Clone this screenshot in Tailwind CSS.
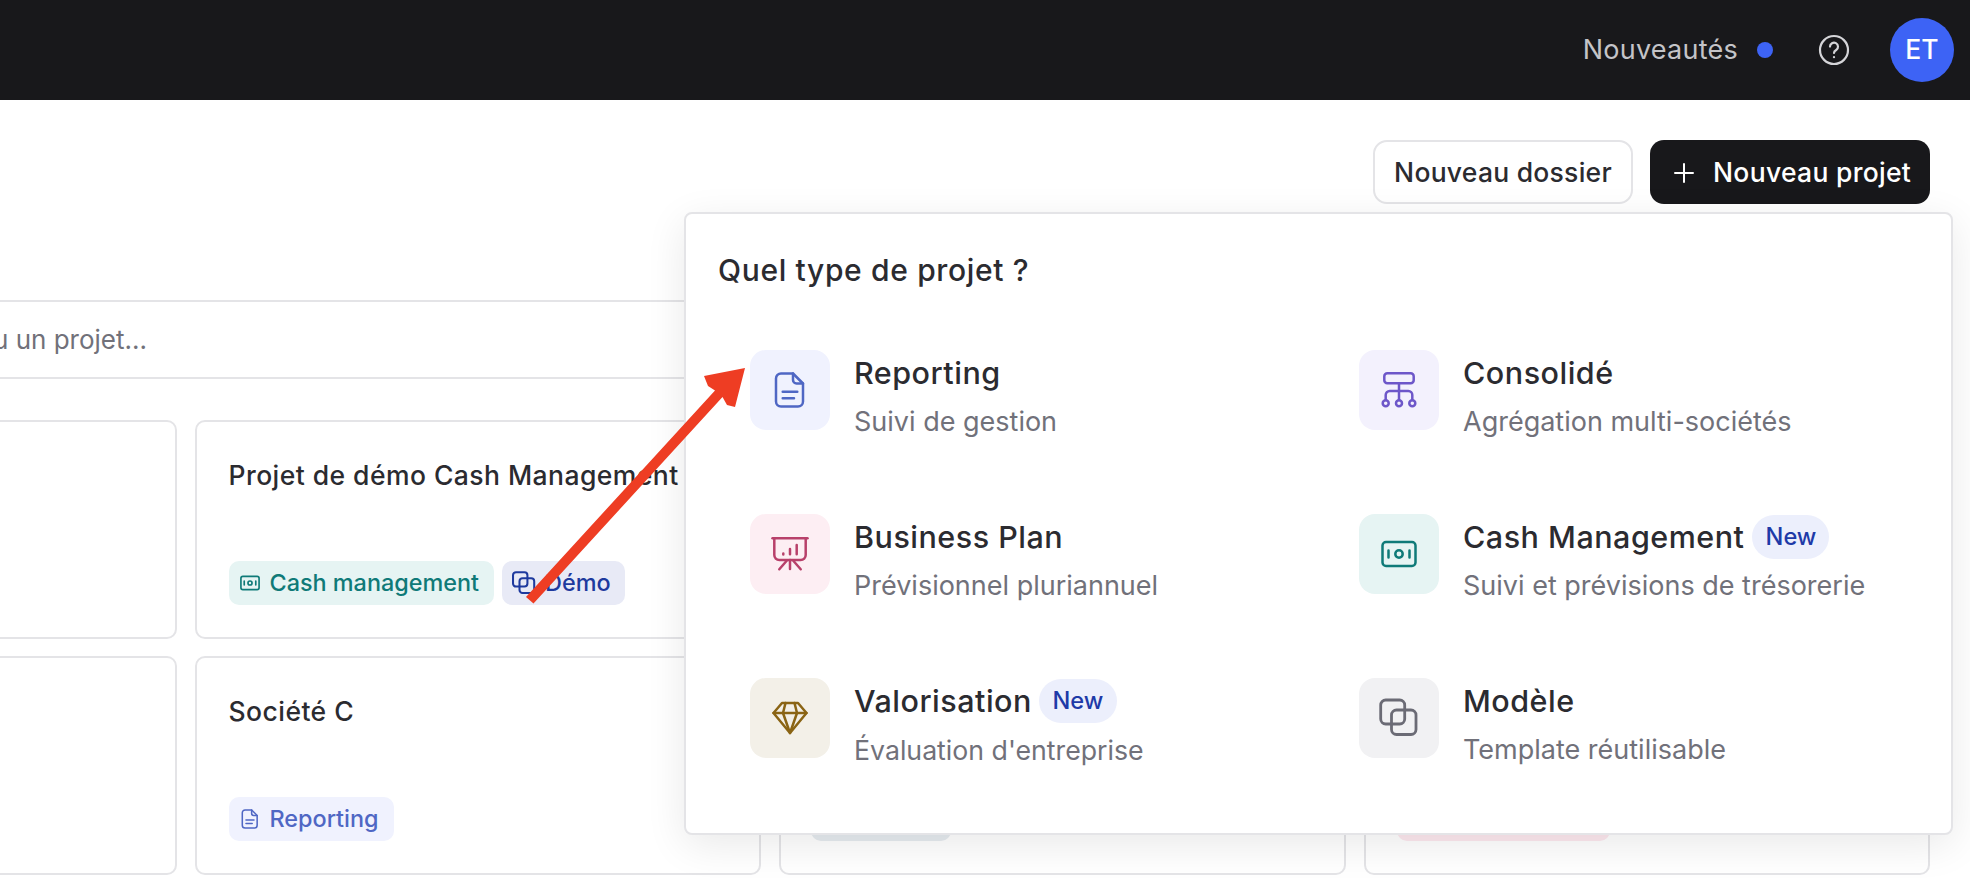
<!doctype html>
<html lang="fr">
<head>
<meta charset="utf-8">
<title>Projets</title>
<script src="https://cdn.jsdelivr.net/npm/@tailwindcss/browser@4"></script>
</head>
<body class="relative h-[890px] w-[1970px] overflow-hidden bg-white font-['Inter',sans-serif] text-[#2b2b30]">
  <header class="flex h-[100px] items-center justify-end bg-[#18181b] pr-[16px]">
    <span class="text-[27px] tracking-[0.25px] text-[#c4c4c8]">Nouveautés</span>
    <span class="ml-[19px] h-[16px] w-[16px] rounded-full bg-[#3d63f5]"></span>
    <svg class="ml-[45px]" width="32" height="32" viewBox="0 0 32 32" fill="none" stroke="#d4d4d8" stroke-width="2.200" stroke-linecap="round" stroke-linejoin="round"><circle cx="16" cy="16" r="14"/><path d="M12 12.600a4 4 0 1 1 6.200 3.400c-1.400.9-2.200 1.600-2.200 3"/><path d="M16 23v.2"/></svg>
    <span class="ml-[40px] flex h-[64px] w-[64px] items-center justify-center rounded-full bg-[#3d63f5] text-[26.500px] font-[450] text-white">ET</span>
  </header>

  <main>
    <div class="flex justify-end gap-[17px] pr-[40px] pt-[40px]">
      <button class="flex h-[64px] w-[260px] items-center justify-center rounded-[14px] border-2 border-[#e4e4e7] bg-white pt-[1px] text-[26.500px] font-[450] tracking-[0.25px] text-[#2b2b30]">Nouveau dossier</button>
      <button class="flex h-[64px] w-[280px] items-center gap-[19px] rounded-[14px] bg-[#18181b] pl-[24px] pt-[1px] text-[26.500px] font-[450] tracking-[0.3px] text-white">
        <svg width="20" height="20" viewBox="0 0 20 20" fill="none" stroke="#fff" stroke-width="2" stroke-linecap="round"><path d="M10 1v18M1 10h18"/></svg>
        Nouveau projet
      </button>
    </div>

    <div class="mr-[40px] mt-[96px] flex h-[79px] items-center border-y-2 border-[#e4e4e7]">
      <div class="flex w-[147px] justify-end overflow-hidden whitespace-nowrap text-[26px] text-[#71717a]">Rechercher un dossier ou un projet...</div>
    </div>

    <div class="ml-[-390px] mr-[40px] mt-[41px] grid grid-cols-4 gap-x-[18px] gap-y-[17px]">
      <div class="h-[219px] rounded-[10px] border-2 border-[#e4e4e7]"></div>
      <div class="h-[219px] rounded-[10px] border-2 border-[#e4e4e7] px-[32px] pt-[37px]">
        <div class="h-[32px] whitespace-nowrap text-[26.500px] font-[450] leading-[32px] tracking-[0.45px]">Projet de démo Cash Management</div>
        <div class="mt-[70px] flex gap-[8px]">
          <span class="flex h-[44px] items-center gap-[9px] rounded-[10px] bg-[#e6f4f3] pl-[10px] pr-[15px] text-[23.400px] font-[450] text-[#0f7a78]">
            <svg width="22" height="22" viewBox="0 0 40 40" fill="none" stroke="currentColor" stroke-width="3" stroke-linecap="round"><rect x="3.500" y="8" width="33" height="24" rx="3.500"/><circle cx="20" cy="20" r="3.700"/><path d="M9.500 16.500v7M30.500 16.500v7"/></svg>
            Cash management
          </span>
          <span class="flex h-[44px] items-center gap-[9px] rounded-[10px] bg-[#e8eaf6] pl-[10px] pr-[14px] text-[23.400px] font-[450] text-[#1e3a9e]">
            <svg width="24" height="24" viewBox="0 0 40 40" fill="none" stroke="currentColor" stroke-width="3.400"><rect x="1.700" y="2" width="24" height="24" rx="5"/><rect x="12.500" y="12" width="24.500" height="24.500" rx="5"/></svg>
            Démo
          </span>
        </div>
      </div>
      <div class="h-[219px] rounded-[10px] border-2 border-[#e4e4e7]"></div>
      <div class="h-[219px] rounded-[10px] border-2 border-[#e4e4e7]"></div>

      <div class="h-[219px] rounded-[10px] border-2 border-[#e4e4e7]"></div>
      <div class="h-[219px] rounded-[10px] border-2 border-[#e4e4e7] px-[32px] pt-[37px]">
        <div class="h-[32px] whitespace-nowrap text-[26.500px] font-[450] leading-[32px] tracking-[0.45px]">Société C</div>
        <div class="mt-[70px] flex">
          <span class="flex h-[44px] items-center gap-[9px] rounded-[10px] bg-[#f0f2fe] pl-[10px] pr-[15px] text-[23.400px] font-[450] text-[#4f67c4]">
            <svg width="22" height="22" viewBox="0 0 40 40" fill="none" stroke="currentColor" stroke-width="2.800" stroke-linejoin="round" stroke-linecap="round"><path d="M23 3.500H11a5 5 0 0 0-5 5v23a5 5 0 0 0 5 5h17a5 5 0 0 0 5-5V13.500z"/><path d="M23 3.500V10a3.500 3.500 0 0 0 3.500 3.500H33"/><path d="M12.700 21.700h14.600M12.700 28.300H24"/></svg>
            Reporting
          </span>
        </div>
      </div>
      <div class="h-[219px] rounded-[10px] border-2 border-[#e4e4e7] px-[30px] pt-[37px]">
        <div class="mt-[102px] h-[44px] w-[140px] rounded-[10px] bg-[#e6ebf0]"></div>
      </div>
      <div class="h-[219px] rounded-[10px] border-2 border-[#e4e4e7] px-[31px] pt-[37px]">
        <div class="mt-[102px] h-[44px] w-[213px] rounded-[10px] bg-[#fde8ef]"></div>
      </div>
    </div>
  </main>

  <!-- Menu -->
  <section class="absolute left-[684px] top-[212px] h-[623px] w-[1269px] rounded-[8px] border-2 border-[#e4e4e7] bg-white pl-[32px] pt-[38px] shadow-[0_10px_40px_rgba(0,0,0,0.09)]">
    <h2 class="h-[36px] text-[30px] font-[450] leading-[36px] tracking-[0.65px] text-[#2b2b30]">Quel type de projet ?</h2>
    <div class="ml-[32px] mt-[62px] grid grid-cols-[609px_1fr] gap-y-[72px]">

      <div class="flex h-[92px] gap-[24px]">
        <div class="flex h-[80px] w-[80px] items-center justify-center rounded-[16px] bg-[#f0f2fe]">
          <svg width="40" height="40" viewBox="0 0 40 40" fill="none" stroke="#4f67c4" stroke-width="2.500" stroke-linejoin="round" stroke-linecap="round"><path d="M23 3.500H11a5 5 0 0 0-5 5v23a5 5 0 0 0 5 5h17a5 5 0 0 0 5-5V13.500z"/><path d="M23 3.500V10a3.500 3.500 0 0 0 3.500 3.500H33"/><path d="M12.700 21.700h14.600M12.700 28.300H24"/></svg>
        </div>
        <div>
          <div class="flex h-[46px] items-center text-[30.500px] font-[450] tracking-[0.5px]">Reporting</div>
          <div class="mt-[7px] text-[27px] leading-[38px] text-[#71717a]">Suivi de gestion</div>
        </div>
      </div>

      <div class="flex h-[92px] gap-[24px]">
        <div class="flex h-[80px] w-[80px] items-center justify-center rounded-[16px] bg-[#f3f1fd]">
          <svg width="40" height="40" viewBox="0 0 40 40" fill="none" stroke="#6d57c9" stroke-width="2.500" stroke-linejoin="round" stroke-linecap="round"><rect x="5.300" y="3.300" width="29.400" height="10" rx="3"/><path d="M20 13.300V30"/><path d="M6.700 30v-5a4 4 0 0 1 4-4h18.600a4 4 0 0 1 4 4v5"/><circle cx="6.700" cy="33.300" r="3"/><circle cx="20" cy="33.300" r="3"/><circle cx="33.300" cy="33.300" r="3"/></svg>
        </div>
        <div>
          <div class="flex h-[46px] items-center text-[30.500px] font-[450] tracking-[0.5px]">Consolidé</div>
          <div class="mt-[7px] text-[27px] leading-[38px] text-[#71717a]">Agrégation multi-sociétés</div>
        </div>
      </div>

      <div class="flex h-[92px] gap-[24px]">
        <div class="flex h-[80px] w-[80px] items-center justify-center rounded-[16px] bg-[#fdeef3]">
          <svg width="40" height="40" viewBox="0 0 40 40" fill="none" stroke="#b8406a" stroke-width="2.500" stroke-linejoin="round" stroke-linecap="round"><path d="M2.500 4.300h35"/><path d="M4.300 4.300V21a5 5 0 0 0 5 5h21.400a5 5 0 0 0 5-5V4.300"/><path d="M20 26v9M16.700 26.700 9.300 35.300M23.300 26.700l7.400 8.600"/><path d="M13.300 19.500v1M20 15v5.300M26.700 11v9.300"/></svg>
        </div>
        <div>
          <div class="flex h-[46px] items-center text-[30.500px] font-[450] tracking-[0.5px]">Business Plan</div>
          <div class="mt-[7px] text-[27px] leading-[38px] text-[#71717a]">Prévisionnel pluriannuel</div>
        </div>
      </div>

      <div class="flex h-[92px] gap-[24px]">
        <div class="flex h-[80px] w-[80px] items-center justify-center rounded-[16px] bg-[#e6f4f3]">
          <svg width="40" height="40" viewBox="0 0 40 40" fill="none" stroke="#0f7a78" stroke-width="2.500" stroke-linecap="round"><rect x="3.500" y="8" width="33" height="24" rx="3.500"/><circle cx="20" cy="20" r="3.700"/><path d="M9.500 16.500v7M30.500 16.500v7"/></svg>
        </div>
        <div>
          <div class="flex h-[46px] items-center gap-[8px] text-[30.500px] font-[450] tracking-[0.5px]">Cash Management
            <span class="flex h-[44px] w-[77px] items-center justify-center rounded-full bg-[#eceffc] text-[23.600px] font-[450] tracking-normal text-[#1e3aa8]">New</span>
          </div>
          <div class="mt-[7px] text-[27px] leading-[38px] text-[#71717a]">Suivi et prévisions de trésorerie</div>
        </div>
      </div>

      <div class="flex h-[92px] gap-[24px]">
        <div class="flex h-[80px] w-[80px] items-center justify-center rounded-[16px] bg-[#f3f0e8]">
          <svg width="40" height="40" viewBox="0 0 40 40" fill="none" stroke="#8a6414" stroke-width="2.500" stroke-linejoin="round" stroke-linecap="round"><path d="M12 5h16l8.500 10L20 35 3.500 15z"/><path d="M3.500 15h33"/><path d="M15.500 5 13 15l7 20 7-20-2.500-10"/></svg>
        </div>
        <div>
          <div class="flex h-[46px] items-center gap-[7px] text-[30.500px] font-[450] tracking-[0.5px]">Valorisation
            <span class="flex h-[44px] w-[78px] items-center justify-center rounded-full bg-[#eceffc] text-[23.600px] font-[450] tracking-normal text-[#1e3aa8]">New</span>
          </div>
          <div class="mt-[7px] text-[26.700px] leading-[38px] text-[#71717a]">Évaluation d'entreprise</div>
        </div>
      </div>

      <div class="flex h-[92px] gap-[24px]">
        <div class="flex h-[80px] w-[80px] items-center justify-center rounded-[16px] bg-[#f1f1f3]">
          <svg width="40" height="40" viewBox="0 0 40 40" fill="none" stroke="#6b6b75" stroke-width="2.800"><rect x="1.700" y="2" width="24" height="24" rx="5"/><rect x="12.500" y="12" width="24.500" height="24.500" rx="5"/></svg>
        </div>
        <div>
          <div class="flex h-[46px] items-center text-[30.500px] font-[450] tracking-[0.5px]">Modèle</div>
          <div class="mt-[7px] text-[27px] leading-[38px] text-[#71717a]">Template réutilisable</div>
        </div>
      </div>
    </div>
  </section>

  <!-- Annotation arrow -->
  <svg class="absolute left-0 top-0" width="1970" height="890" viewBox="0 0 1970 890"><polygon fill="#ee3d23" points="745,368 735,407 727,405 722.500,397 533.500,603.500 526,597 715,390.500 708,386 704,376"/></svg>
</body>
</html>
